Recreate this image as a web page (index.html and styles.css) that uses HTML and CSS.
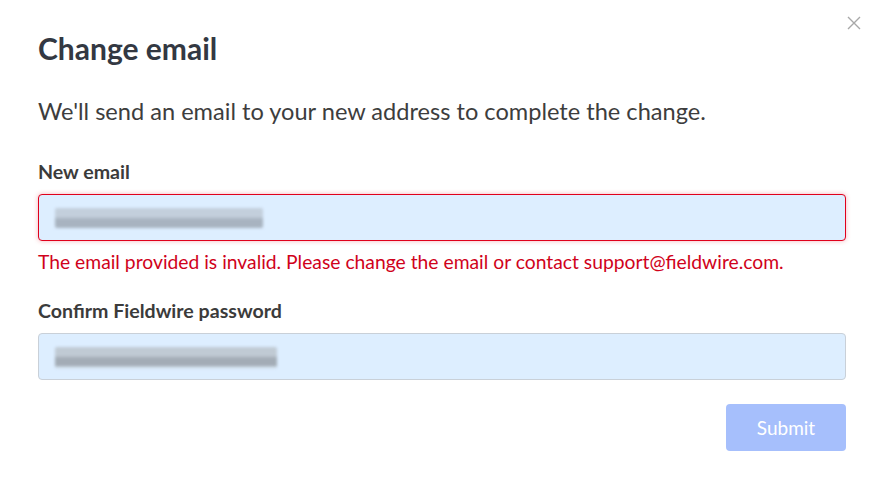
FILE: index.html
```html
<!DOCTYPE html>
<html>
<head>
<meta charset="utf-8">
<link rel="stylesheet" href="styles.css">
</head>
<body>
<div class="modal">
  <button class="close" aria-label="Close">
    <svg width="14" height="14" viewBox="0 0 14 14"><path d="M1 1L13 13M13 1L1 13" stroke="#a8a8a8" stroke-width="1.4" fill="none"/></svg>
  </button>
  <h1 class="title">Change email</h1>
  <p class="intro">We'll send an email to your new address to complete the change.</p>
  <div class="field">
    <label class="label">New email</label>
    <div class="input input-error"><span class="blur blur-email"></span></div>
    <div class="error">The email provided is invalid. Please change the email or contact support@fieldwire.com.</div>
  </div>
  <div class="field field-second">
    <label class="label">Confirm Fieldwire password</label>
    <div class="input"><span class="blur blur-pass"></span></div>
  </div>
  <div class="actions">
    <button class="submit">Submit</button>
  </div>
</div>
</body>
</html>
```
FILE: styles.css
```css
html, body { margin: 0; padding: 0; background: #fff; }
body { font-family: Lato, "Open Sans", sans-serif; width: 880px; height: 480px; overflow: hidden; }
.modal { position: relative; padding: 30px 34px 0 38px; }
.close { position: absolute; top: 16px; right: 19px; border: 0; background: none; padding: 0; width: 14px; height: 14px; cursor: pointer; }
.close svg { display: block; }
.title { margin: 0; font-size: 30px; font-weight: 700; color: #333842; line-height: 36px; }
.intro { margin: 29px 0 0; font-size: 23.6px; color: #3d3d3d; line-height: 32px; }
.field { margin-top: 33px; }
.field-second { margin-top: 25px; }
.label { display: block; font-size: 19.6px; font-weight: 700; color: #3b3b3b; line-height: 24px; }
.input { margin-top: 10px; height: 45px; border: 1px solid #c9d0d8; border-radius: 4px; background: #ddeeff; display: flex; align-items: center; padding-left: 16px; }
.input-error { border-color: #e0001b; box-shadow: 0 0 5px rgba(224,0,27,0.3); }
.blur { display: block; height: 20px; border-radius: 2px; filter: blur(1.6px); }
.blur-email { width: 208px; background: linear-gradient(to bottom, #c3cfdc 0 45%, #a8b3c0 55% 100%); }
.blur-pass { width: 222px; height: 22px; margin-top: 2px; background: linear-gradient(to bottom, #c0cad4 0 40%, #a3acb6 50% 85%, #d6e4f2 92% 100%); }
.error { margin-top: 9px; font-size: 19.3px; color: #d0021b; line-height: 24px; }
.actions { display: flex; justify-content: flex-end; margin-top: 24px; }
.submit { width: 120px; height: 47px; border: 0; border-radius: 4px; background: #a6bffc; color: #fff; font-family: Lato, sans-serif; font-size: 19px; }
```
